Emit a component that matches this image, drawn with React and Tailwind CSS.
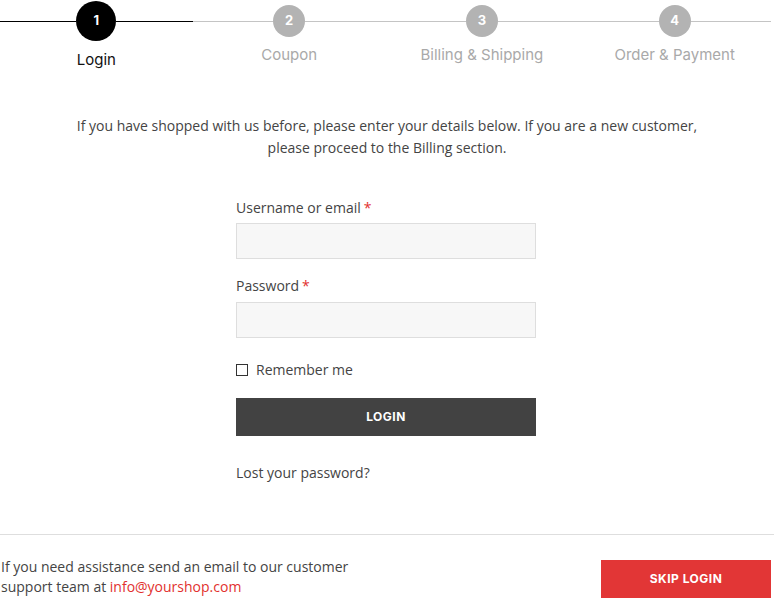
import React from "react";

const steps = [
  { n: 1, label: "Login", active: true },
  { n: 2, label: "Coupon" },
  { n: 3, label: "Billing & Shipping" },
  { n: 4, label: "Order & Payment" },
];

const Step = ({ n, label, active }) => (
  <div className="flex flex-col items-center">
    <div className="flex h-[42px] w-full items-center">
      <div className={`h-px flex-1 ${active ? "bg-black" : "bg-[#c4c4c4]"}`} />
      {active ? (
        <div className="flex h-10 w-10 items-center justify-center rounded-full bg-black text-[13px] font-bold text-white">
          {n}
        </div>
      ) : (
        <div className="flex h-8 w-8 items-center justify-center rounded-full bg-[#b3b3b3] text-[13px] font-bold text-white">
          {n}
        </div>
      )}
      <div className={`h-px flex-1 ${active ? "bg-black" : "bg-[#c4c4c4]"}`} />
    </div>
    <div
      className={`text-[15px] leading-5 ${active ? "mt-[8px] text-[#111]" : "mt-[3px] text-[#a9a9a9]"}`}
    >
      {label}
    </div>
  </div>
);

const Field = ({ label, type, gap }) => (
  <div>
    <label className="block text-[14px] leading-5 text-[#444]">
      {label}
      <span className="ml-[3px] text-[#e2312e]">*</span>
    </label>
    <input
      type={type}
      className={`${gap} block h-9 w-full border border-[#dedede] bg-[#f7f7f7] outline-none`}
    />
  </div>
);

export default function App() {
  return (
    <div className="w-[774px] bg-white font-['Open_Sans',sans-serif] text-[#444]">
      {/* Steps */}
      <div className="grid grid-cols-4 pr-[3px] font-['Inter',sans-serif]">
        {steps.map((s) => (
          <Step key={s.n} {...s} />
        ))}
      </div>

      {/* Intro */}
      <p className="mt-[45px] text-center text-[14px] leading-[22px] text-[#444]">
        If you have shopped with us before, please enter your details below. If you are a new customer,
        <br />
        please proceed to the Billing section.
      </p>

      {/* Form */}
      <form className="ml-[236px] mt-[39px] w-[300px]" onSubmit={(e) => e.preventDefault()}>
        <Field label="Username or email" type="text" gap="mt-[5px]" />
        <div className="mt-[17px]">
          <Field label="Password" type="password" gap="mt-[6px]" />
        </div>
        <label className="mt-[22px] flex items-center gap-2 text-[14px] leading-5 text-[#444]">
          <span className="block h-3 w-3 border border-[#333] bg-white" />
          Remember me
        </label>
        <button className="mt-[18px] flex h-[38px] w-full items-center justify-center bg-[#424242] font-['Inter',sans-serif] text-[12px] font-bold tracking-[0.5px] text-white">
          LOGIN
        </button>
        <a className="mt-[27px] block text-[14px] leading-5 text-[#444]">Lost your password?</a>
      </form>

      {/* Footer */}
      <div className="mt-[51px] border-t border-[#dedede]">
        <div className="flex items-start justify-between pt-[22px] pl-px pr-[3px]">
          <p className="text-[14px] leading-5 text-[#444]">
            If you need assistance send an email to our customer
            <br />
            support team at <span className="text-[#e2312e]">info@yourshop.com</span>
          </p>
          <button className="mt-[3px] flex h-[38px] w-[170px] items-center justify-center bg-[#e23636] font-['Inter',sans-serif] text-[12px] font-bold tracking-[0.5px] text-white">
            SKIP LOGIN
          </button>
        </div>
      </div>
    </div>
  );
}
